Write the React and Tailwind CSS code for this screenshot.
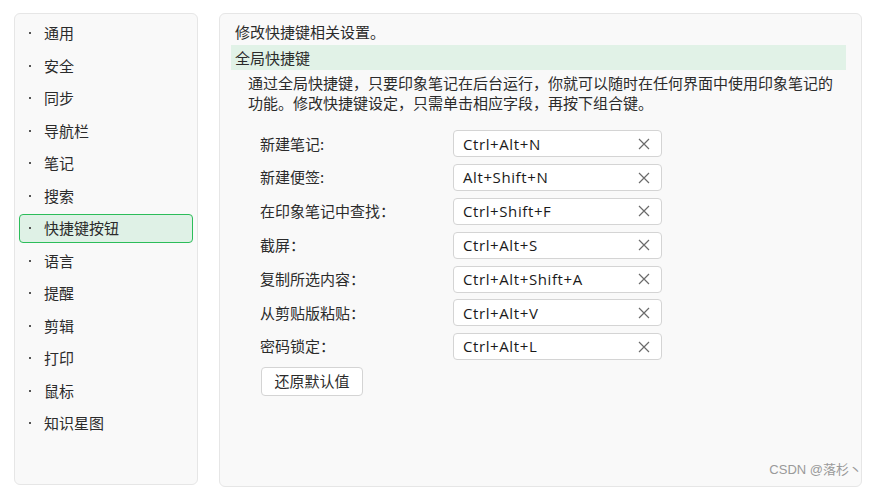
import React from 'react';

const menu = ['通用', '安全', '同步', '导航栏', '笔记', '搜索', '快捷键按钮', '语言', '提醒', '剪辑', '打印', '鼠标', '知识星图'];

const shortcuts = [
  ['新建笔记:', 'Ctrl+Alt+N'],
  ['新建便签:', 'Alt+Shift+N'],
  ['在印象笔记中查找：', 'Ctrl+Shift+F'],
  ['截屏：', 'Ctrl+Alt+S'],
  ['复制所选内容：', 'Ctrl+Alt+Shift+A'],
  ['从剪贴版粘贴：', 'Ctrl+Alt+V'],
  ['密码锁定：', 'Ctrl+Alt+L'],
];

const cjk = { fontFamily: '"Microsoft YaHei", "Noto Sans CJK SC", sans-serif' };
const latin = { fontFamily: '"Segoe UI", "Open Sans", "Noto Sans", sans-serif' };

const ClearIcon = () => (
  <svg width="12" height="12" viewBox="0 0 12 12" fill="none" stroke="#6b6b6b" strokeWidth="1.2">
    <path d="M1 1 L11 11 M11 1 L1 11" />
  </svg>
);

const App = () => {
  return (
    <div className="relative w-[875px] h-[488px] bg-white flex gap-[21px] pl-[14px] pt-[13px] text-[15px] text-[#2b2b2b]" style={cjk}>
      {/* sidebar */}
      <div className="w-[184px] h-[472px] bg-[#f9f9f9] border border-[#e6e6e6] rounded-[6px] pt-[3px]">
        {menu.map((item) => {
          const active = item === '快捷键按钮';
          return (
            <div key={item} className="h-[32.5px] flex items-center">
              <div
                className={
                  'mx-[4px] w-full h-[29px] flex items-center pl-[9px] rounded-[4px] border ' +
                  (active ? 'bg-[#dff1e6] border-[#2cbd5a]' : 'border-transparent')
                }
              >
                <span className="w-[2px] h-[2px] bg-[#555] mr-[13px]" />
                <span>{item}</span>
              </div>
            </div>
          );
        })}
      </div>

      {/* content */}
      <div className="w-[643px] h-[474px] bg-[#f9f9f9] border border-[#e6e6e6] rounded-[6px] pl-[11px] pr-[15px] pt-[7px]">
        <div className="pl-[4px] h-[22px] leading-[22px]">修改快捷键相关设置。</div>
        <div className="mt-[2px] h-[25px] bg-[#e1f2e7] pl-[4px] leading-[25px]">全局快捷键</div>
        <div className="ml-[17px] w-[590px] pt-[3px] leading-[20px]">
          通过全局快捷键，只要印象笔记在后台运行，你就可以随时在任何界面中使用印象笔记的功能。修改快捷键设定，只需单击相应字段，再按下组合键。
        </div>
        <div className="mt-[14px] pl-[29px]">
          {shortcuts.map(([label, keys]) => (
            <div key={label} className="h-[33.8px] flex items-center">
              <div className="w-[193px]">{label}</div>
              <div className="w-[209px] h-[27px] bg-white border border-[#d4d4d4] rounded-[4px] flex items-center justify-between pl-[9px] pr-[11px]">
                <span className="text-[15px] tracking-[0.6px] text-[#1a1a1a]" style={latin}>{keys}</span>
                <ClearIcon />
              </div>
            </div>
          ))}
          <button className="mt-[3px] ml-[1px] w-[102px] h-[29px] bg-white border border-[#d4d4d4] rounded-[4px] text-[15px] text-[#2b2b2b]">
            还原默认值
          </button>
        </div>
      </div>

      <div className="absolute right-[13px] bottom-[9px] text-[13px] text-[#9a9a9a]" style={{ fontFamily: 'Arial, "Liberation Sans", "Noto Sans CJK SC", sans-serif' }}>
        CSDN @落杉丶
      </div>
    </div>
  );
};

export default App;
